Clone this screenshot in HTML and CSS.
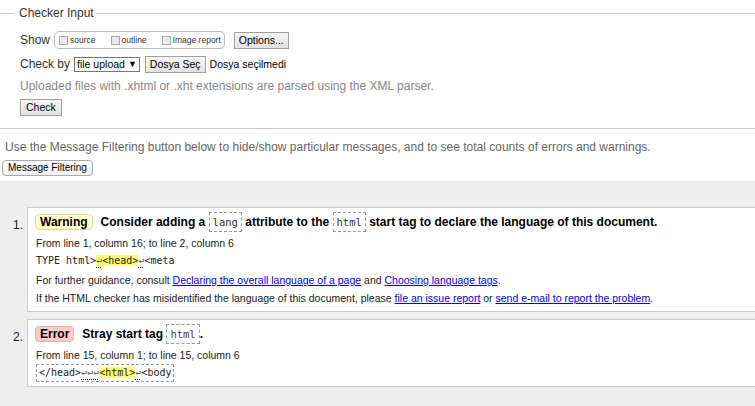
FILE: index.html
```html
<!DOCTYPE html>
<html lang="en">
<head>
<meta charset="utf-8">
<title>Checker</title>
<link rel="stylesheet" href="styles.css">
</head>
<body>
<form class="checker">
  <fieldset class="input">
    <legend>Checker Input</legend>
    <div class="row row-show">
      <span class="label">Show</span>
      <fieldset class="opts">
        <label><input type="checkbox">source</label>
        <label><input type="checkbox">outline</label>
        <label><input type="checkbox">Image report</label>
      </fieldset>
      <button type="button" class="btn">Options...</button>
    </div>
    <div class="row row-check">
      <span class="label">Check by</span>
      <span class="select">file upload <span class="arrow">▼</span></span>
      <button type="button" class="btn">Dosya Seç</button>
      <span class="nofile">Dosya seçilmedi</span>
    </div>
    <p class="hint">Uploaded files with .xhtml or .xht extensions are parsed using the XML parser.</p>
    <div class="row row-submit">
      <button type="button" class="btn">Check</button>
    </div>
  </fieldset>
</form>
<p class="filter-note">Use the Message Filtering button below to hide/show particular messages, and to see total counts of errors and warnings.</p>
<button type="button" class="btn-filter">Message Filtering</button>
<div class="results">
  <ol class="messages">
    <li class="msg">
      <span class="num">1.</span>
      <div class="box">
        <p class="title"><strong class="badge warn">Warning</strong>Consider adding a <code>lang</code> attribute to the <code>html</code> start tag to declare the language of this document.</p>
        <p class="loc">From line 1, column 16; to line 2, column 6</p>
        <p class="extract"><code>TYPE html&gt;<mark><u>↩</u>&lt;head&gt;</mark><u>↩</u>&lt;meta</code></p>
        <p class="loc">For further guidance, consult <a href="#">Declaring the overall language of a page</a> and <a href="#">Choosing language tags</a>.</p>
        <p class="loc">If the HTML checker has misidentified the language of this document, please <a href="#">file an issue report</a> or <a href="#">send e-mail to report the problem</a>.</p>
      </div>
    </li>
    <li class="msg">
      <span class="num">2.</span>
      <div class="box">
        <p class="title"><strong class="badge err">Error</strong>Stray start tag <code class="tag">html</code>.</p>
        <p class="loc">From line 15, column 1; to line 15, column 6</p>
        <p class="extract"><code class="boxed">&lt;/head&gt;<u>↩↩↩</u><mark>&lt;html&gt;</mark><u>↩</u>&lt;body</code></p>
      </div>
    </li>
  </ol>
</div>
</body>
</html>
```
FILE: styles.css
```css
* { box-sizing: border-box; }
html, body { margin: 0; padding: 0; background: #fff; }
body {
  font-family: "Liberation Sans", Arial, sans-serif;
  font-size: 12px;
  color: #333;
  overflow-x: hidden;
}
p { margin: 0; }

.checker { margin: 0; }
.input {
  margin: 6px 0 0;
  padding: 0 20px 12px 20px;
  border: 0;
  border-top: 1px solid #ccc;
  border-bottom: 1px solid #ccc;
  min-width: 0;
}
.input legend {
  margin-left: -6px;
  padding: 0 2px 0 5px;
  font-size: 12px;
  line-height: 15px;
  color: #333;
}
.row { display: flex; align-items: center; }
.row-show { margin-top: 10px; height: 18px; }
.label { color: #333; }
.opts {
  display: flex;
  align-items: center;
  height: 18px;
  margin: 0 9px 0 4px;
  padding: 0 3px 0 4px;
  border: 1px solid #bbb;
  border-radius: 5px;
  min-width: 0;
}
.opts label {
  display: flex;
  align-items: center;
  font-size: 8.5px;
  color: #333;
  margin-right: 15px;
}
.opts label:last-child { margin-right: 0; }
.opts input {
  appearance: none;
  -webkit-appearance: none;
  width: 9px;
  height: 9px;
  margin: 0 2px 0 0;
  border: 1px solid #a8a8a8;
  background: #eaeaea;
}
.btn {
  font-family: "Liberation Sans", Arial, sans-serif;
  font-size: 10.5px;
  color: #000;
  height: 17px;
  padding: 0 4px;
  border: 1px solid #a0a0a0;
  border-radius: 0;
  background: linear-gradient(#f6f6f6, #e2e2e2);
  line-height: 15px;
}
.row-check { margin-top: 6px; height: 18px; }
.select {
  display: inline-flex;
  align-items: center;
  height: 15px;
  margin: 0 5px 0 4px;
  padding: 0 2px 0 2px;
  border: 1px solid #777;
  font-size: 10.5px;
  color: #000;
  background: #fff;
}
.select .arrow { font-size: 9px; margin-left: 3px; }
.nofile { font-size: 10.5px; color: #000; margin-left: 4px; }
.hint { margin-top: 5px; line-height: 16px; color: #888; }
.row-submit { margin-top: 5px; }
.row-submit .btn { padding: 0 5px; }

.filter-note { margin: 10px 0 0 5px; line-height: 16px; color: #666; }
.btn-filter {
  display: block;
  margin: 5px 0 0 2px;
  height: 16px;
  padding: 0 5px;
  font-family: "Liberation Sans", Arial, sans-serif;
  font-size: 10px;
  color: #000;
  border: 1px solid #aaa;
  border-radius: 4px;
  background: linear-gradient(#fff, #f0f0f0);
  line-height: 14px;
}

.results {
  margin-top: 5px;
  background: #eee;
  padding: 26px 0 30px;
}
.messages { list-style: none; margin: 0; padding: 0; }
.msg { display: flex; align-items: flex-start; }
.msg + .msg { margin-top: 7px; }
.num {
  width: 27px;
  padding: 8px 4px 0 0;
  text-align: right;
  font-size: 12px;
  line-height: 20px;
  color: #222;
}
.box {
  flex: 1;
  margin-right: -10px;
  background: #fff;
  border: 1px solid #ccc;
  padding: 4px 8px 4px 8px;
}
.title {
  line-height: 20px;
  font-weight: bold;
  font-size: 12px;
  color: #000;
}
.badge {
  display: inline-block;
  padding: 0 4px;
  margin-right: 8px;
  border: 1px solid;
  border-radius: 4px;
  line-height: 14px;
  font-size: 12px;
  margin-left: -1px;
}
.badge.warn { background: #ffffc8; border-color: #ddd9a0; }
.badge.err { background: #fcc9c9; border-color: #e6b0b0; }
code {
  font-family: "DejaVu Sans Mono", "Liberation Mono", monospace;
}
.title code {
  font-weight: normal;
  font-size: 10.5px;
  color: #333;
  border: 1px dashed #999;
  padding: 3px 3px;
  background: #fff;
}
.title code.tag { color: #603060; }
.loc {
  font-size: 10.5px;
  line-height: 18px;
  color: #222;
}
.title + .loc { margin-top: 2px; }
.extract + .loc { margin-top: 1px; }
.extract {
  font-size: 10px;
  line-height: 18px;
  color: #222;
}
.extract code { font-size: 10px; }
.extract code.boxed {
  display: inline-block;
  border: 1px dashed #999;
  padding: 0 2px;
  line-height: 16px;
}
.extract u {
  text-decoration: underline dotted #000;
  text-underline-offset: 3px;
  color: #555;
}
mark { background: #ffff70; color: inherit; }
a { color: #00e; text-decoration: underline; }
```
